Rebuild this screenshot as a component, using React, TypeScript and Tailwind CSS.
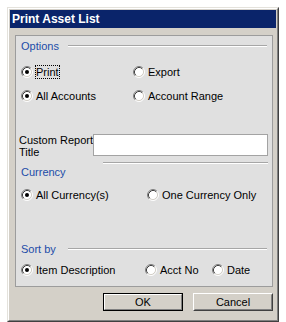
import React from "react";

function Radio({ checked }: { checked?: boolean }) {
  return (
    <svg width="12" height="12" viewBox="0 0 12 12" className="shrink-0">
      <circle cx="6" cy="6" r="4.5" fill="#ffffff" />
      <path d="M2.11 9.89 A5.5 5.5 0 0 1 9.89 2.11" stroke="#808080" strokeWidth="1" fill="none" />
      <path d="M9.89 2.11 A5.5 5.5 0 0 1 2.11 9.89" stroke="#ffffff" strokeWidth="1" fill="none" />
      <path d="M2.82 9.18 A4.5 4.5 0 0 1 9.18 2.82" stroke="#404040" strokeWidth="1" fill="none" />
      <path d="M9.18 2.82 A4.5 4.5 0 0 1 2.82 9.18" stroke="#d4d0c8" strokeWidth="1" fill="none" />
      {checked && <circle cx="6" cy="6" r="2" fill="#000000" />}
    </svg>
  );
}

function Option({ label, checked, focus, className }: { label: string; checked?: boolean; focus?: boolean; className?: string }) {
  return (
    <div className={"flex items-center " + (className ?? "")}>
      <Radio checked={checked} />
      <span
        className={
          "ml-[2px] leading-[12px] border " +
          (focus ? "border-dotted border-black" : "border-transparent")
        }
      >
        {label}
      </span>
    </div>
  );
}

function Header({ label }: { label: string }) {
  return (
    <div className="flex items-center h-[20px] pr-[5px]">
      <span className="w-[47px] text-[#1c4ca8]">{label}</span>
      <div className="flex-1 border-t border-t-[#a6a6a6] border-b border-b-white" />
    </div>
  );
}

export default function App() {
  return (
    <div
      className="w-[286px] h-[322px] bg-white pt-[7px] pl-[7px] text-[11px] text-black"
      style={{ fontFamily: '"Liberation Sans", Arial, sans-serif' }}
    >
      <div className="w-[272px] h-[315px] bg-[#d4d0c8] border border-t-[#e4e2dc] border-l-[#e4e2dc] border-r-[#404040] border-b-[#404040]">
        <div className="h-full border border-t-white border-l-white border-r-[#808080] border-b-[#808080] p-[1px] flex flex-col">
          <div className="h-[18px] bg-[#0a246a] text-white font-bold text-[12px] flex items-center pl-[2px]">
            Print Asset List
          </div>
          <div className="mt-[7px] ml-[5px] mr-[3px] h-[252px] bg-[#e0e0e0] border border-[#9c9c9c] pl-[5px] flex flex-col">
            <Header label="Options" />
            <div className="mt-[6px] h-[20px] flex items-center">
              <Option label="Print" checked focus className="w-[112px]" />
              <Option label="Export" />
            </div>
            <div className="mt-[4px] h-[20px] flex items-center">
              <Option label="All Accounts" checked className="w-[112px]" />
              <Option label="Account Range" />
            </div>
            <div className="mt-[28px] h-[22px] flex items-start">
              <div className="-ml-[2px] w-[74px] leading-[12px]">
                Custom Report
                <br />
                Title
              </div>
              <div className="w-[175px] h-[22px] bg-white border border-[#a3a3a3]" />
            </div>
            <div className="mt-[6px] ml-[82px] mr-[4px] border-t border-t-[#a6a6a6] border-b border-b-white" />
            <div className="h-[17px] flex items-center text-[#1c4ca8]">Currency</div>
            <div className="mt-[4px] h-[20px] flex items-center">
              <Option label="All Currency(s)" checked className="w-[126px]" />
              <Option label="One Currency Only" />
            </div>
            <div className="mt-[34px]">
              <Header label="Sort by" />
            </div>
            <div className="mt-[1px] h-[20px] flex items-center">
              <Option label="Item Description" checked className="w-[124px]" />
              <Option label="Acct No" className="w-[67px]" />
              <Option label="Date" />
            </div>
          </div>
          <div className="mt-[6px] mr-[3px] flex justify-end gap-[10px]">
            <button className="w-[80px] h-[18px] border border-black bg-[#d4d0c8] p-0">
              <div className="h-full border border-t-white border-l-white border-r-[#808080] border-b-[#808080] flex items-center justify-center leading-none">
                OK
              </div>
            </button>
            <button className="w-[80px] h-[18px] border border-t-white border-l-white border-r-[#404040] border-b-[#404040] bg-[#d4d0c8] p-0">
              <div className="h-full border border-t-[#d4d0c8] border-l-[#d4d0c8] border-r-[#808080] border-b-[#808080] flex items-center justify-center leading-none">
                Cancel
              </div>
            </button>
          </div>
        </div>
      </div>
    </div>
  );
}
